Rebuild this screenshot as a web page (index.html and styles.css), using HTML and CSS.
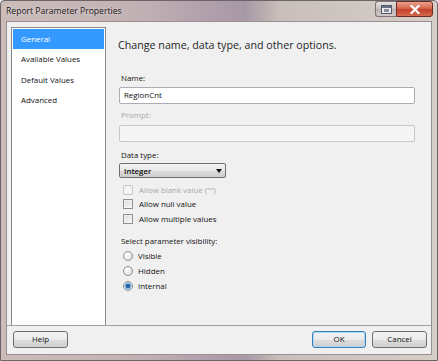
FILE: index.html
```html
<!DOCTYPE html>
<html>
<head>
<meta charset="utf-8">
<link rel="stylesheet" href="styles.css">
</head>
<body>
<div class="window">
  <div class="titlebar">
    <span class="title">Report Parameter Properties</span>
    <div class="controls">
      <div class="ctl ctl-help">
        <svg width="11" height="9" viewBox="0 0 11 9"><rect x="0.5" y="0.5" width="10" height="8" fill="#e8e8ee" stroke="#55596a"/><rect x="1" y="1" width="9" height="2" fill="#6a7088"/><rect x="3" y="4" width="5" height="3" fill="#8a90a4"/></svg>
      </div>
      <div class="ctl ctl-close">
        <svg width="10" height="9" viewBox="0 0 10 9"><path d="M1.5 1 L8.5 8 M8.5 1 L1.5 8" stroke="#fff" stroke-width="2.2" stroke-linecap="square"/></svg>
      </div>
    </div>
  </div>
  <div class="client">
    <div class="main">
      <div class="nav">
        <div class="nav-item selected">General</div>
        <div class="nav-item">Available Values</div>
        <div class="nav-item">Default Values</div>
        <div class="nav-item">Advanced</div>
      </div>
      <div class="pane">
        <div class="heading">Change name, data type, and other options.</div>
        <div class="label label-name">Name:</div>
        <div class="textbox">RegionCnt</div>
        <div class="label label-prompt disabled">Prompt:</div>
        <div class="textbox textbox-disabled"></div>
        <div class="label label-type">Data type:</div>
        <div class="combo"><span>Integer</span><span class="arrow"></span></div>
        <div class="checks">
          <div class="row row-first disabled"><span class="cb cb-disabled"></span><span>Allow blank value ("")</span></div>
          <div class="row"><span class="cb"></span><span>Allow null value</span></div>
          <div class="row"><span class="cb"></span><span>Allow multiple values</span></div>
        </div>
        <div class="label label-vis">Select parameter visibility:</div>
        <div class="radios">
          <div class="row"><span class="rb"></span><span>Visible</span></div>
          <div class="row"><span class="rb"></span><span>Hidden</span></div>
          <div class="row"><span class="rb rb-on"></span><span>Internal</span></div>
        </div>
      </div>
    </div>
    <div class="footer">
      <div class="btn btn-help">Help</div>
      <div class="spacer"></div>
      <div class="btn btn-ok">OK</div>
      <div class="btn btn-cancel">Cancel</div>
    </div>
  </div>
</div>
</body>
</html>
```

FILE: styles.css
```css
html, body {
  margin: 0;
  padding: 0;
  background: #ffffff;
}

body {
  font-family: "Open Sans", "Noto Sans", sans-serif;
  color: #111111;
}

.window {
  width: 438px;
  height: 361px;
  box-sizing: border-box;
  background: linear-gradient(90deg, #cbbcb9 0%, #c3b2b4 30%, #b09fab 48%, #a898a6 56%, #c9bfba 64%, #d5cfc8 100%);
  border: 1px solid #6d6468;
  border-radius: 4px 4px 0 0;
  display: flex;
  flex-direction: column;
}

.titlebar {
  height: 20px;
  display: flex;
  align-items: flex-start;
  justify-content: space-between;
}

.title {
  font-size: 8.6px;
  margin: 5px 0 0 5px;
  line-height: 11px;
  color: #141414;
  text-shadow: 0 0 3px rgba(255, 255, 255, 0.7);
}

.controls {
  display: flex;
  margin-right: 4px;
}

.ctl {
  height: 16px;
  display: flex;
  align-items: center;
  justify-content: center;
  box-sizing: border-box;
}

.ctl-help {
  width: 21px;
  border: 1px solid #7c7476;
  border-right: none;
  border-radius: 3px 0 0 3px;
  background: linear-gradient(#e6e1de, #c7c0bf 50%, #b8b1b2 51%, #cfc9c6);
}

.ctl-close {
  width: 37px;
  border: 1px solid #6e2a22;
  border-radius: 0 3px 3px 0;
  background: linear-gradient(#e9a38e, #d8674f 45%, #c4412c 55%, #d36a4c);
}

.client {
  flex: 1;
  margin: 0 5px 5px 5px;
  background: #f0f0f0;
  border: 1px solid #9a9092;
  display: flex;
  flex-direction: column;
}

.main {
  height: 304px;
  box-sizing: border-box;
  padding: 5px 0 0 4px;
  border-bottom: 1px solid #a0a0a0;
  display: flex;
}

.nav {
  width: 95px;
  box-sizing: border-box;
  background: #ffffff;
  border: 1px solid #828790;
  border-bottom: none;
  padding: 1px 1px 0 1px;
}

.nav-item {
  height: 20.3px;
  line-height: 20px;
  font-size: 7.9px;
  padding-left: 8px;
}

.nav-item.selected {
  background: #3399ff;
  color: #ffffff;
}

.pane {
  flex: 1;
  padding: 0 16px 0 13px;
  display: flex;
  flex-direction: column;
  font-size: 7.9px;
}

.heading {
  font-size: 10.7px;
  line-height: 14px;
  margin: 11px 0 0 -1px;
  color: #262626;
}

.label {
  line-height: 10px;
  height: 10px;
  padding-left: 2px;
}

.label-name { margin-top: 21px; }
.label-prompt { margin-top: 6px; }
.label-type { margin-top: 8px; }
.label-vis { margin-top: 10px; }

.disabled {
  color: #a8a8a8;
}

.textbox {
  height: 17px;
  box-sizing: border-box;
  margin-top: 4px;
  background: #ffffff;
  border: 1px solid #abadb3;
  border-radius: 2px;
  padding-left: 4px;
  line-height: 15px;
}

.textbox-disabled {
  margin-top: 5px;
  background: #f5f5f5;
  border-color: #c8c8c8;
}

.combo {
  width: 107px;
  height: 15px;
  box-sizing: border-box;
  margin-top: 3px;
  border: 1px solid #707070;
  border-radius: 2px;
  background: linear-gradient(#f4f4f4, #e8e8e8 50%, #dcdcdc 51%, #cdcdcd);
  display: flex;
  align-items: center;
  justify-content: space-between;
  padding: 0 3px 0 4px;
  font-weight: 600;
}

.arrow {
  width: 0;
  height: 0;
  border-left: 3px solid transparent;
  border-right: 3px solid transparent;
  border-top: 4px solid #111111;
}

.checks {
  margin-top: 4px;
  display: flex;
  flex-direction: column;
}

.checks .row, .radios .row {
  height: 14.4px;
  display: flex;
  align-items: center;
  padding-left: 4px;
}

.checks .row-first {
  height: 15px;
}

.cb {
  width: 10px;
  height: 10px;
  box-sizing: border-box;
  border: 1px solid #8e8f8f;
  background: linear-gradient(135deg, #dcdcdc, #f8f8f8);
  box-shadow: inset 0 0 0 1px #f4f4f4;
  margin-right: 6px;
}

.cb-disabled {
  border-color: #c6c6c6;
  background: #f4f4f4;
  border-radius: 2px;
}

.radios {
  margin-top: 3px;
  display: flex;
  flex-direction: column;
}

.radios .row {
  height: 15px;
}

.rb {
  width: 10px;
  height: 10px;
  box-sizing: border-box;
  border-radius: 50%;
  border: 1px solid #8e8f8f;
  background: radial-gradient(circle at 35% 35%, #ffffff, #d6d6d6);
  margin-right: 5px;
}

.rb-on {
  background: radial-gradient(circle at 50% 50%, #1d4f82 0, #2f79b7 2px, #9ec8ea 3px, #e8e8e8 4px);
}

.footer {
  flex: 1;
  display: flex;
  align-items: flex-start;
  padding: 5px 4px 0 6px;
  gap: 6px;
}

.spacer {
  flex: 1;
}

.btn {
  height: 17px;
  box-sizing: border-box;
  border: 1px solid #707070;
  border-radius: 3px;
  background: linear-gradient(#f2f2f2, #ebebeb 50%, #dddddd 51%, #cfcfcf);
  font-size: 7.9px;
  line-height: 15px;
  text-align: center;
}

.btn-help { width: 55px; }
.btn-ok {
  width: 54px;
  border-color: #3c7fb1;
  box-shadow: inset 0 0 0 1px #a8d8f6;
}
.btn-cancel { width: 55px; }
```
